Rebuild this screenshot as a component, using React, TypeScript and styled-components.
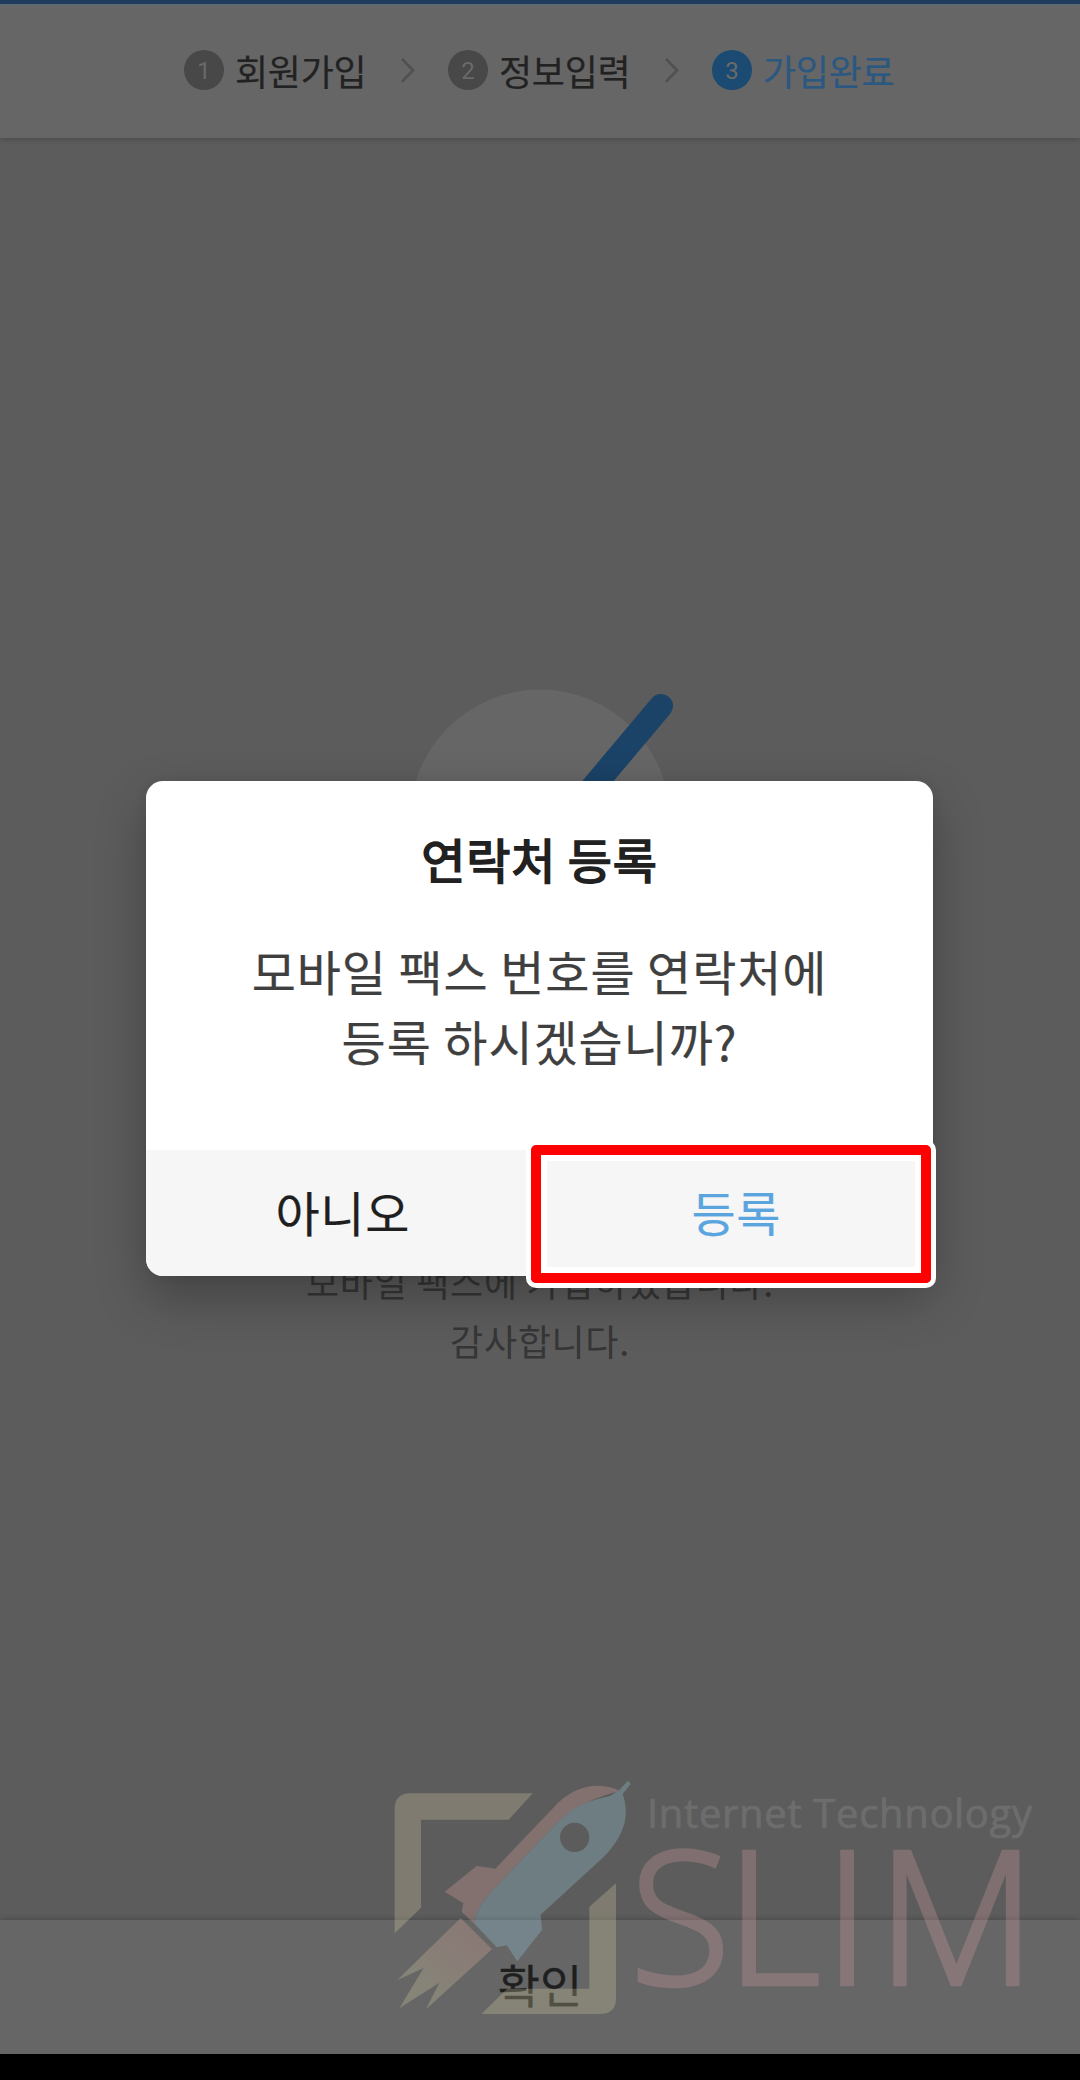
import React from "react";
import styled, { createGlobalStyle } from "styled-components";

const GlobalStyle = createGlobalStyle`
  * { box-sizing: border-box; }
  body { margin: 0; background: #000; }
`;

const Screen = styled.div`
  position: relative;
  display: flex;
  flex-direction: column;
  width: 1080px;
  height: 2080px;
  overflow: hidden;
  background: #5c5c5c;
  color: #1f1f1f;
  font-family: "Noto Sans CJK KR", sans-serif;
`;

const Header = styled.header`
  display: flex;
  align-items: center;
  height: 138px;
  padding: 0 0 2px 184px;
  border-top: 4px solid #1f3c5c;
  background: #666;
  box-shadow: inset 0 2px 0 #5f6a70, 0 1px 6px rgba(0, 0, 0, 0.22);
`;

const Step = styled.div<{ $active?: boolean }>`
  display: flex;
  align-items: center;
  width: 182px;
  gap: 11px;
  color: ${(p) => (p.$active ? "#2b5880" : "#222")};
`;

const StepNumber = styled.span<{ $active?: boolean }>`
  flex: none;
  width: 40px;
  height: 40px;
  border-radius: 50%;
  background: ${(p) => (p.$active ? "#1b4a72" : "#484848")};
  color: #6a6a6a;
  font: 24px/42px Roboto, sans-serif;
  text-align: center;
`;

const StepLabel = styled.span`
  font-size: 36px;
  line-height: 52px;
  letter-spacing: -0.3px;
  white-space: nowrap;
  -webkit-text-stroke: 0.2px currentColor;
`;

const Chevron = styled.svg`
  flex: none;
  width: 14px;
  height: 26px;
  margin: 0 33px 0 35px;
  fill: none;
  stroke: #505050;
  stroke-width: 2.6;
`;

const Main = styled.main`
  flex: 1;
  display: flex;
  flex-direction: column;
  align-items: center;
  padding-top: 542px;
`;

const CheckMark = styled.svg`
  width: 300px;
  height: 280px;
`;

const DoneText = styled.p`
  margin: 292px 0 0;
  color: #363636;
  font-size: 36px;
  line-height: 58.5px;
  letter-spacing: 0.7px;
  text-align: center;
`;

const Footer = styled.footer`
  height: 134px;
  background: #666;
  box-shadow: 0 -1px 5px rgba(0, 0, 0, 0.2);
  font-size: 46px;
  line-height: 127px;
  text-align: center;
  -webkit-text-stroke: 0.3px currentColor;
`;

const SystemBar = styled.div`
  height: 26px;
  background: #000;
`;

const Overlay = styled.div`
  position: absolute;
  inset: 0;
  display: flex;
  align-items: flex-start;
  justify-content: center;
  padding: 781px 1px 0 0;
`;

const Dialog = styled.section`
  position: relative;
  display: flex;
  flex-direction: column;
  width: 787px;
  height: 495px;
  border-radius: 17px;
  background: #fff;
  box-shadow: 0 22px 50px rgba(0, 0, 0, 0.27), 0 0 12px rgba(0, 0, 0, 0.06);
`;

const DialogTitle = styled.h2`
  margin: 42px 0 0;
  color: #212121;
  font-size: 48px;
  font-weight: 400;
  line-height: 70px;
  letter-spacing: 0.8px;
  text-align: center;
  -webkit-text-stroke: 1.7px currentColor;
`;

const DialogText = styled.p`
  flex: 1;
  margin: 42px 0 0;
  color: #3f3f3f;
  font-size: 48px;
  line-height: 70px;
  letter-spacing: 0.9px;
  text-align: center;
  -webkit-text-stroke: 0.2px currentColor;
`;

const Actions = styled.div`
  display: grid;
  grid-template-columns: 1fr 1fr;
  height: 126px;
  border-radius: 0 0 17px 17px;
  background: #f6f6f6;
`;

const ActionButton = styled.button<{ $primary?: boolean }>`
  padding: 0 0 4px;
  border: 0;
  background: transparent;
  color: ${(p) => (p.$primary ? "#5aa5de" : "#1f1f1f")};
  font: 48px/70px "Noto Sans CJK KR", sans-serif;
  letter-spacing: 0.6px;
  -webkit-text-stroke: 0.2px currentColor;
`;

const Highlight = styled.div`
  position: absolute;
  left: 385px;
  top: 364px;
  width: 400px;
  height: 138px;
  border: 10px solid #fe0000;
  border-radius: 5px;
  box-shadow: 0 0 0 5px #fff, inset 0 0 0 6px #fff;
`;

const Watermark = styled.div`
  position: absolute;
  left: 380px;
  top: 1760px;
  display: flex;
  opacity: 0.25;
`;

const Rocket = styled.svg`
  width: 256px;
  height: 280px;
`;

const Wordmark = styled.svg`
  width: 444px;
  height: 320px;
  margin-left: -20px;
`;

const steps = ["회원가입", "정보입력", "가입완료"];

export default function App() {
  return (
    <Screen>
      <GlobalStyle />
      <Header>
        {steps.map((label, i) => {
          const active = i === steps.length - 1;
          return (
            <React.Fragment key={label}>
              <Step $active={active}>
                <StepNumber $active={active}>{i + 1}</StepNumber>
                <StepLabel>{label}</StepLabel>
              </Step>
              {!active && (
                <Chevron viewBox="0 0 14 26">
                  <path d="M1 2 12 13.3 1 24.6" />
                </Chevron>
              )}
            </React.Fragment>
          );
        })}
      </Header>

      <Main>
        <CheckMark viewBox="390 680 300 280">
          <circle cx="540" cy="819.5" r="130" fill="#666" />
          <path
            d="M497 825 540 850 661 706"
            fill="none"
            stroke="#1b4367"
            strokeWidth="24"
            strokeLinecap="round"
            strokeLinejoin="round"
          />
        </CheckMark>
        <DoneText>
          모바일 팩스에 가입하였습니다.
          <br />
          감사합니다.
        </DoneText>
      </Main>

      <Footer>확인</Footer>
      <SystemBar />

      <Overlay>
        <Dialog>
          <DialogTitle>연락처 등록</DialogTitle>
          <DialogText>
            모바일 팩스 번호를 연락처에
            <br />
            등록 하시겠습니까?
          </DialogText>
          <Actions>
            <ActionButton>아니오</ActionButton>
            <ActionButton $primary>등록</ActionButton>
          </Actions>
          <Highlight />
        </Dialog>
      </Overlay>

      <Watermark>
        <Rocket viewBox="0 0 768 840">
          <defs>
            <linearGradient id="flame" x1="0.9" y1="0.1" x2="0.1" y2="0.9">
              <stop offset="0.2" stopColor="#f4b8a8" />
              <stop offset="0.75" stopColor="#e6daac" />
            </linearGradient>
          </defs>
          <path d="M44 520V148Q44 100 92 100H458L386 179H123V443Z" fill="#e6daac" />
          <path d="M708 370V714Q708 762 660 762H304L382 686H628V440Z" fill="#e6daac" />
          <path
            d="M720 92C650 60 575 80 520 143L346 326 290 318 194 395 250 430 245 455 284 492Q285 450 325 405L530 190C590 135 640 115 720 92Z"
            fill="#f4b0a8"
          />
          <path
            fillRule="evenodd"
            d="M284 492Q285 450 325 405L530 190C590 128 640 120 690 108L718 90 744 62 752 72 728 102C750 165 735 225 670 292L482 464 486 510 412 604 380 556 350 562ZM628 232A44 44 0 1 0 540 232A44 44 0 1 0 628 232Z"
            fill="#a0e0f4"
          />
          <path d="M242 474 336 568 138 748 178 668 58 745 131 624 52 660Z" fill="url(#flame)" />
        </Rocket>
        <Wordmark viewBox="616 1760 444 320">
          <text
            x="647"
            y="1828"
            fontFamily="Open Sans"
            fontSize="40"
            textLength="385"
            fill="#a0a0a0"
            stroke="#a0a0a0"
            strokeWidth="0.7"
          >
            Internet Technology
          </text>
          <text
            x="630 726 824 877"
            y="1984"
            fontFamily="Open Sans"
            fontWeight="300"
            fontSize="184"
            fill="#e8a8ac"
            stroke="#e8a8ac"
            strokeWidth="4.5"
          >
            SLIM
          </text>
        </Wordmark>
      </Watermark>
    </Screen>
  );
}
